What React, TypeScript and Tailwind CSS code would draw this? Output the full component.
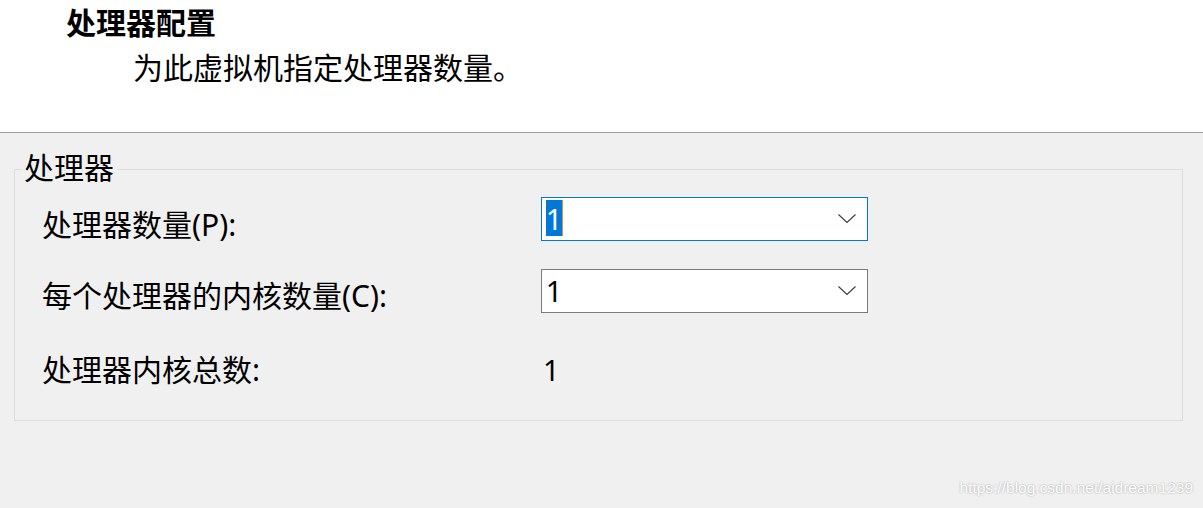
import React from "react";

function Chevron() {
  return (
    <svg width="18" height="10" viewBox="0 0 18 10" className="shrink-0">
      <polyline points="0.5,0.5 9,8.5 17.5,0.5" fill="none" stroke="#3c3c3c" strokeWidth="1.1" />
    </svg>
  );
}

function Combo({ focused }: { focused?: boolean }) {
  return (
    <div
      className={
        focused
          ? "w-[327px] h-[44px] bg-white border border-[#0078d7] flex items-start justify-between pr-[11px]"
          : "w-[327px] h-[44px] bg-white border border-[#7a7a7a] flex items-start justify-between pr-[11px]"
      }
    >
      <div className="flex ml-[4px] mt-[2px] h-[36px]">
        {focused ? (
          <>
            <span className="w-[16px] h-[36px] bg-[#0078d7] text-white flex items-center justify-center text-[29px] leading-none">1</span>
            <span className="w-[1px] h-[36px] bg-[#ff8728]" />
          </>
        ) : (
          <span className="w-[16px] h-[36px] text-black flex items-center justify-center text-[29px] leading-none">1</span>
        )}
      </div>
      <div className="h-[42px] flex items-center">
        <Chevron />
      </div>
    </div>
  );
}

export default function App() {
  return (
    <div className="relative w-[1203px] h-[508px] bg-[#f0f0f0] flex flex-col text-black font-['Noto_Sans','Noto_Sans_CJK_SC',sans-serif] overflow-hidden">
      <header className="h-[133px] shrink-0 bg-white border-b border-[#a0a0a0]">
        <div className="pt-[8px] pl-[66px] text-[30px] font-bold leading-none">处理器配置</div>
        <div className="mt-[15px] pl-[133px] text-[30px] leading-none">为此虚拟机指定处理器数量。</div>
      </header>
      <div className="pt-[20px]">
        <fieldset className="ml-[14px] mr-[20px] border border-[#dcdcdc]">
          <legend className="ml-[6px] px-[3px] pb-[3px] text-[30px] leading-none">处理器</legend>
          <div className="pl-[27px] pt-[11px] pb-[35px] flex flex-col">
            <div className="flex items-start">
              <div className="w-[499px] pt-[13px] text-[30px] leading-none">处理器数量(P):</div>
              <Combo focused />
            </div>
            <div className="flex items-start mt-[28px]">
              <div className="w-[499px] pt-[12px] text-[30px] leading-none">每个处理器的内核数量(C):</div>
              <Combo />
            </div>
            <div className="flex items-start mt-[42px] text-[30px] leading-none">
              <div className="w-[501px]">处理器内核总数:</div>
              <div className="text-[29px]">1</div>
            </div>
          </div>
        </fieldset>
      </div>
      <div className="absolute right-[10px] top-[480px] text-[15.5px] leading-none text-[#fdfdfd] font-['Liberation_Sans',Arial,sans-serif] [text-shadow:0_0_2px_rgba(0,0,0,0.35)]">
        https://blog.csdn.net/aidream1239
      </div>
    </div>
  );
}
